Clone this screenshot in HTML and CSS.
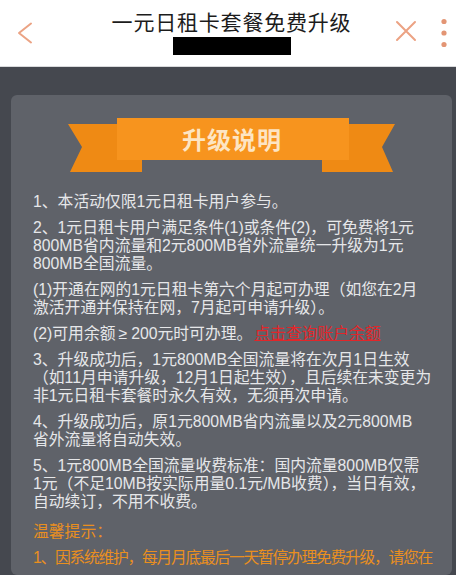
FILE: index.html
```html
<!DOCTYPE html>
<html lang="zh-CN">
<head>
<meta charset="utf-8">
<title>一元日租卡套餐免费升级</title>
<link rel="stylesheet" href="styles.css">
</head>
<body>
<header class="topbar">
  <div class="side side-left">
    <svg class="icon-back" width="18" height="22" viewBox="0 0 18 22" aria-hidden="true">
      <path d="M15 1.5 L3 11 L15 20.5" fill="none" stroke="#eba384" stroke-width="2" stroke-linecap="round" stroke-linejoin="round"/>
    </svg>
  </div>
  <div class="title-block">
    <h1 class="title">一元日租卡套餐免费升级</h1>
    <div class="redact"></div>
  </div>
  <div class="side side-right">
    <svg class="icon-close" width="22" height="22" viewBox="0 0 22 22" aria-hidden="true">
      <path d="M2 2 L20 20 M20 2 L2 20" fill="none" stroke="#eca283" stroke-width="2" stroke-linecap="round"/>
    </svg>
    <svg class="icon-more" width="8" height="30" viewBox="0 0 8 30" aria-hidden="true">
      <circle cx="4" cy="3.5" r="2.6" fill="#e39574"/>
      <circle cx="4" cy="15" r="2.6" fill="#e39574"/>
      <circle cx="4" cy="26.5" r="2.6" fill="#e39574"/>
    </svg>
  </div>
</header>

<main class="page">
  <section class="card">
    <div class="ribbon">
      <svg class="ribbon-shape" width="328" height="54" viewBox="0 0 328 54" aria-hidden="true">
        <polygon points="0,6 74,6 74,54 2,54 14,29" fill="#ef8a14"/>
        <polygon points="254,6 327,6 314,29 325,54 254,54" fill="#ef8a14"/>
        <rect x="49" y="0" width="232" height="42" fill="#f7941e"/>
      </svg>
      <h2 class="ribbon-title">升级说明</h2>
    </div>

    <div class="notes">
      <p>1、本活动仅限1元日租卡用户参与。</p>
      <p>2、1元日租卡用户满足条件(1)或条件(2)，可免费将1元<br>800MB省内流量和2元800MB省外流量统一升级为1元<br>800MB全国流量。</p>
      <p>(1)开通在网的1元日租卡第六个月起可办理（如您在2月<br>激活开通并保持在网，7月起可申请升级）。</p>
      <p>(2)可用余额<span class="ge">≥</span>200元时可办理。<a class="link" href="#">点击查询账户余额</a></p>
      <p>3、升级成功后，1元800MB全国流量将在次月1日生效<br>（如11月申请升级，12月1日起生效），且后续在未变更为<br>非1元日租卡套餐时永久有效，无须再次申请。</p>
      <p>4、升级成功后，原1元800MB省内流量以及2元800MB<br>省外流量将自动失效。</p>
      <p>5、1元800MB全国流量收费标准：国内流量800MB仅需<br>1元（不足10MB按实际用量0.1元/MB收费），当日有效，<br>自动续订，不用不收费。</p>
      <p class="tip tip-head">温馨提示：</p>
      <p class="tip tip-line">1、因系统维护，每月月底最后一天暂停办理免费升级，请您在</p>
    </div>
  </section>
</main>
</body>
</html>
```

FILE: styles.css
```css
* { box-sizing: border-box; }

html, body {
  margin: 0;
  padding: 0;
}

body {
  width: 456px;
  height: 575px;
  overflow: hidden;
  background: #45484f;
  font-family: "Liberation Sans", "Noto Sans CJK SC", sans-serif;
}

.topbar {
  display: grid;
  grid-template-columns: 70px 1fr 70px;
  height: 67px;
  background: #ffffff;
  border-bottom: 1px solid #d9dadc;
}

.side {
  display: flex;
  align-items: flex-start;
}

.side-left {
  padding: 22px 0 0 16px;
}

.side-right {
  padding: 20px 0 0 9px;
  gap: 23px;
}

.icon-more {
  margin-top: -2px;
}

.title-block {
  display: flex;
  flex-direction: column;
  align-items: center;
  padding: 8px 0 0 7px;
}

.title {
  margin: 0;
  font-family: "Noto Sans CJK SC", sans-serif;
  font-size: 21px;
  line-height: 26px;
  font-weight: 400;
  color: #1c1c1c;
  white-space: nowrap;
  letter-spacing: 0.8px;
}

.redact {
  width: 118px;
  height: 18px;
  margin-top: 3px;
  background: #000000;
}

.page {
  padding: 28px 4px 0 11px;
}

.card {
  background: #5f6269;
  border-radius: 6px;
  padding: 23px 10px 0 22px;
  min-height: 480px;
}

.ribbon {
  display: grid;
  justify-content: center;
  margin-left: -11px;
}

.ribbon-shape,
.ribbon-title {
  grid-area: 1 / 1;
}

.ribbon-shape {
  display: block;
}

.ribbon-title {
  margin: 0;
  height: 42px;
  line-height: 42px;
  text-align: center;
  font-family: "Noto Sans CJK SC", sans-serif;
  font-size: 24px;
  font-weight: 700;
  color: #fde5c3;
  letter-spacing: 1px;
}

.notes {
  padding-top: 13px;
  color: #e6e7e9;
  font-size: 15.8px;
  line-height: 18px;
}

.notes p {
  margin: 8px 0;
  white-space: nowrap;
}

.ge {
  padding: 0 4px 0 3px;
}

.link {
  margin-left: 2px;
  color: #e2262a;
  text-decoration: underline;
  text-decoration-thickness: 1px;
}

.tip {
  color: #e98f1f;
}

.tip-head {
  margin-top: 12px !important;
}

.tip-line {
  letter-spacing: -1.3px;
}
```
